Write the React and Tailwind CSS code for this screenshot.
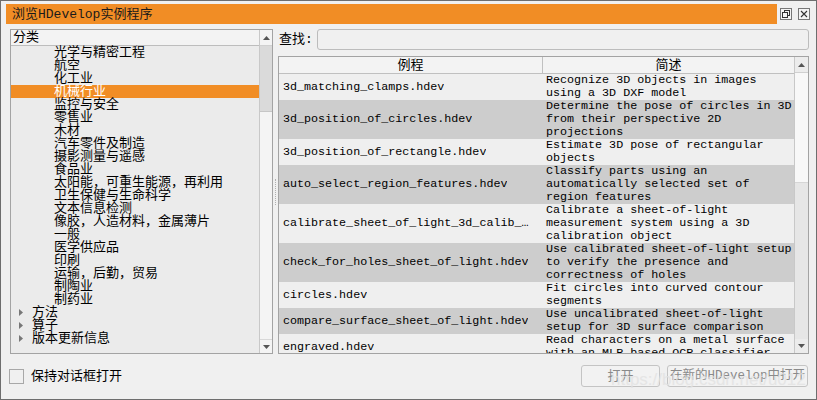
import React from "react";

const FONT = { fontFamily: '"Liberation Mono", "Noto Sans CJK SC", monospace' };

const children = [
  "光学与精密工程", "航空", "化工业", "机械行业", "监控与安全", "零售业", "木材",
  "汽车零件及制造", "摄影测量与遥感", "食品业", "太阳能，可重生能源，再利用",
  "卫生保健与生命科学", "文本信息检测", "像胶，人造材料，金属薄片", "一般",
  "医学供应品", "印刷", "运输，后勤，贸易", "制陶业", "制药业",
];
const tops = ["方法", "算子", "版本更新信息"];

const rows = [
  ["3d_matching_clamps.hdev", ["Recognize 3D objects in images", "using a 3D DXF model"]],
  ["3d_position_of_circles.hdev", ["Determine the pose of circles in 3D", "from their perspective 2D", "projections"]],
  ["3d_position_of_rectangle.hdev", ["Estimate 3D pose of rectangular", "objects"]],
  ["auto_select_region_features.hdev", ["Classify parts using an", "automatically selected set of", "region features"]],
  ["calibrate_sheet_of_light_3d_calib_object.hdev", ["Calibrate a sheet-of-light", "measurement system using a 3D", "calibration object"]],
  ["check_for_holes_sheet_of_light.hdev", ["Use calibrated sheet-of-light setup", "to verify the presence and", "correctness of holes"]],
  ["circles.hdev", ["Fit circles into curved contour", "segments"]],
  ["compare_surface_sheet_of_light.hdev", ["Use uncalibrated sheet-of-light", "setup for 3D surface comparison"]],
  ["engraved.hdev", ["Read characters on a metal surface", "with an MLP-based OCR classifier"]],
];

function UpArrow() {
  return (
    <svg width="7" height="4" viewBox="0 0 7 4"><path d="M0 4 L3.5 0 L7 4 Z" fill="#555" /></svg>
  );
}
function DownArrow() {
  return (
    <svg width="7" height="4" viewBox="0 0 7 4"><path d="M0 0 L3.5 4 L7 0 Z" fill="#555" /></svg>
  );
}

export default function App() {
  return (
    <div
      className="relative w-[817px] h-[400px] bg-[#f0f0f0] border border-[#6e6e6e] overflow-hidden text-[13px] leading-[13px] text-black"
      style={FONT}
    >
      {/* title bar */}
      <div className="flex items-center mt-[3px] ml-[5px] h-[20px]">
        <div className="w-[771px] h-[20px] bg-[#f18d25] flex items-center pl-[6px] text-[13px] text-[#1a1a1a]">
          浏览HDevelop实例程序
        </div>
        <div className="ml-[3px] w-[12px] h-[12px] border border-[#777] bg-[#f4f4f4] flex items-center justify-center">
          <svg width="8" height="8" viewBox="0 0 8 8">
            <rect x="2.5" y="0.5" width="5" height="5" fill="none" stroke="#333" />
            <rect x="0.5" y="2.5" width="5" height="5" fill="#f4f4f4" stroke="#333" />
          </svg>
        </div>
        <div className="ml-[6px] w-[12px] h-[12px] border border-[#777] bg-[#f4f4f4] flex items-center justify-center">
          <svg width="8" height="8" viewBox="0 0 8 8">
            <path d="M1 1 L7 7 M7 1 L1 7" stroke="#333" strokeWidth="1.1" />
          </svg>
        </div>
      </div>

      {/* main */}
      <div className="flex mt-[5px] ml-[9px] h-[325px]">
        {/* left panel */}
        <div className="w-[263px] h-full border border-[#a3a3a3] flex bg-[#ebebeb]">
          <div className="flex-1 flex flex-col overflow-hidden">
            <div className="h-[16px] border-b border-[#bdbdbd] bg-[#f3f3f3] pl-[2px] flex items-center">分类</div>
            <div className="flex flex-col">
              {children.map((c, i) => (
                <div
                  key={c}
                  className={
                    "h-[13px] pl-[43px] whitespace-nowrap " +
                    (i === 3 ? "bg-[#f18d25] text-white" : "")
                  }
                >
                  {c}
                </div>
              ))}
              {tops.map((c) => (
                <div key={c} className="h-[13px] flex items-center whitespace-nowrap">
                  <svg className="ml-[8px] mr-[9px]" width="4" height="7" viewBox="0 0 4 7">
                    <path d="M0 0 L4 3.5 L0 7 Z" fill="#777" />
                  </svg>
                  {c}
                </div>
              ))}
            </div>
          </div>
          <div className="w-[13px] border-l border-[#c8c8c8] bg-[#f4f4f4] flex flex-col">
            <div className="h-[16px] flex items-center justify-center border-b border-[#d0d0d0]"><UpArrow /></div>
            <div className="h-[66px] bg-[#dadada] border-b border-[#c6c6c6]" />
            <div className="flex-1" />
            <div className="h-[14px] flex items-center justify-center border-t border-[#d8d8d8]"><DownArrow /></div>
          </div>
        </div>

        {/* splitter */}
        <div className="w-[5px] flex items-center justify-center">
          <div className="w-px h-[26px] border-l border-dotted border-[#b0b0b0]" />
        </div>

        {/* right panel */}
        <div className="w-[531px] h-full flex flex-col">
          <div className="flex items-center h-[21px]">
            <span className="ml-[1px] w-[38px]">查找:</span>
            <div className="flex-1 h-[21px] border border-[#bcbcbc] rounded-[3px] bg-[#f0f0f0]" />
          </div>
          <div className="mt-[6px] flex-1 border border-[#a3a3a3] flex overflow-hidden bg-[#efefef]">
            <div className="flex-1 flex flex-col overflow-hidden">
              <div className="h-[17px] flex border-b border-[#c0c0c0] bg-[#f3f3f3] shrink-0">
                <div className="w-[264px] border-r border-[#c0c0c0] flex items-center justify-center">例程</div>
                <div className="flex-1 flex items-center justify-center">简述</div>
              </div>
              {rows.map(([name, desc], i) => (
                <div
                  key={name}
                  className={"flex shrink-0 " + (i % 2 === 1 ? "bg-[#cdcdcd]" : "bg-[#efefef]")}
                  style={{ height: i === 8 ? 26 : Math.max(desc.length, 2) * 13 }}
                >
                  <div className="w-[264px] pl-[4px] pr-[13px] flex items-center text-[11.7px] overflow-hidden">
                    <span className="truncate">{name}</span>
                  </div>
                  <div className="flex-1 pl-[3px] text-[11.7px] leading-[13px] whitespace-nowrap overflow-hidden">
                    {desc.map((d) => (
                      <div key={d} className="h-[13px]">{d}</div>
                    ))}
                  </div>
                </div>
              ))}
            </div>
            <div className="w-[14px] border-l border-[#c8c8c8] bg-[#ececec] flex flex-col">
              <div className="h-[16px] flex items-center justify-center border-b border-[#d0d0d0]"><UpArrow /></div>
              <div className="h-[110px] bg-[#f8f8f8] border-b border-[#d6d6d6]" />
              <div className="flex-1 bg-[#e6e6e6]" />
              <div className="h-[14px] flex items-center justify-center"><DownArrow /></div>
            </div>
          </div>
        </div>
      </div>

      {/* bottom */}
      <div className="flex items-center mt-[11px] h-[22px]">
        <div className="ml-[8px] w-[15px] h-[15px] border border-[#a8a8a8] bg-[#f0f0f0]" />
        <span className="ml-[7px]">保持对话框打开</span>
        <div className="flex-1" />
        <div className="w-[79px] h-[22px] border border-[#c4c4c4] rounded-[3px] bg-[#f2f2f2] flex items-center justify-center text-[#8a8a8a]">打开</div>
        <div className="ml-[7px] mr-[8px] w-[141px] h-[22px] border border-[#c4c4c4] rounded-[3px] bg-[#f2f2f2] flex items-center justify-center text-[#8a8a8a] whitespace-nowrap text-[12.5px]">在新的HDevelop中打开</div>
      </div>

      {/* watermark */}
      <div
        className="absolute left-[610px] top-[370px] text-[17px] leading-[17px] text-[#e2e2e2] opacity-80 whitespace-nowrap pointer-events-none"
        style={{ fontFamily: '"Liberation Sans", sans-serif' }}
      >
        https://blog.csdn.net/u012
      </div>
    </div>
  );
}
